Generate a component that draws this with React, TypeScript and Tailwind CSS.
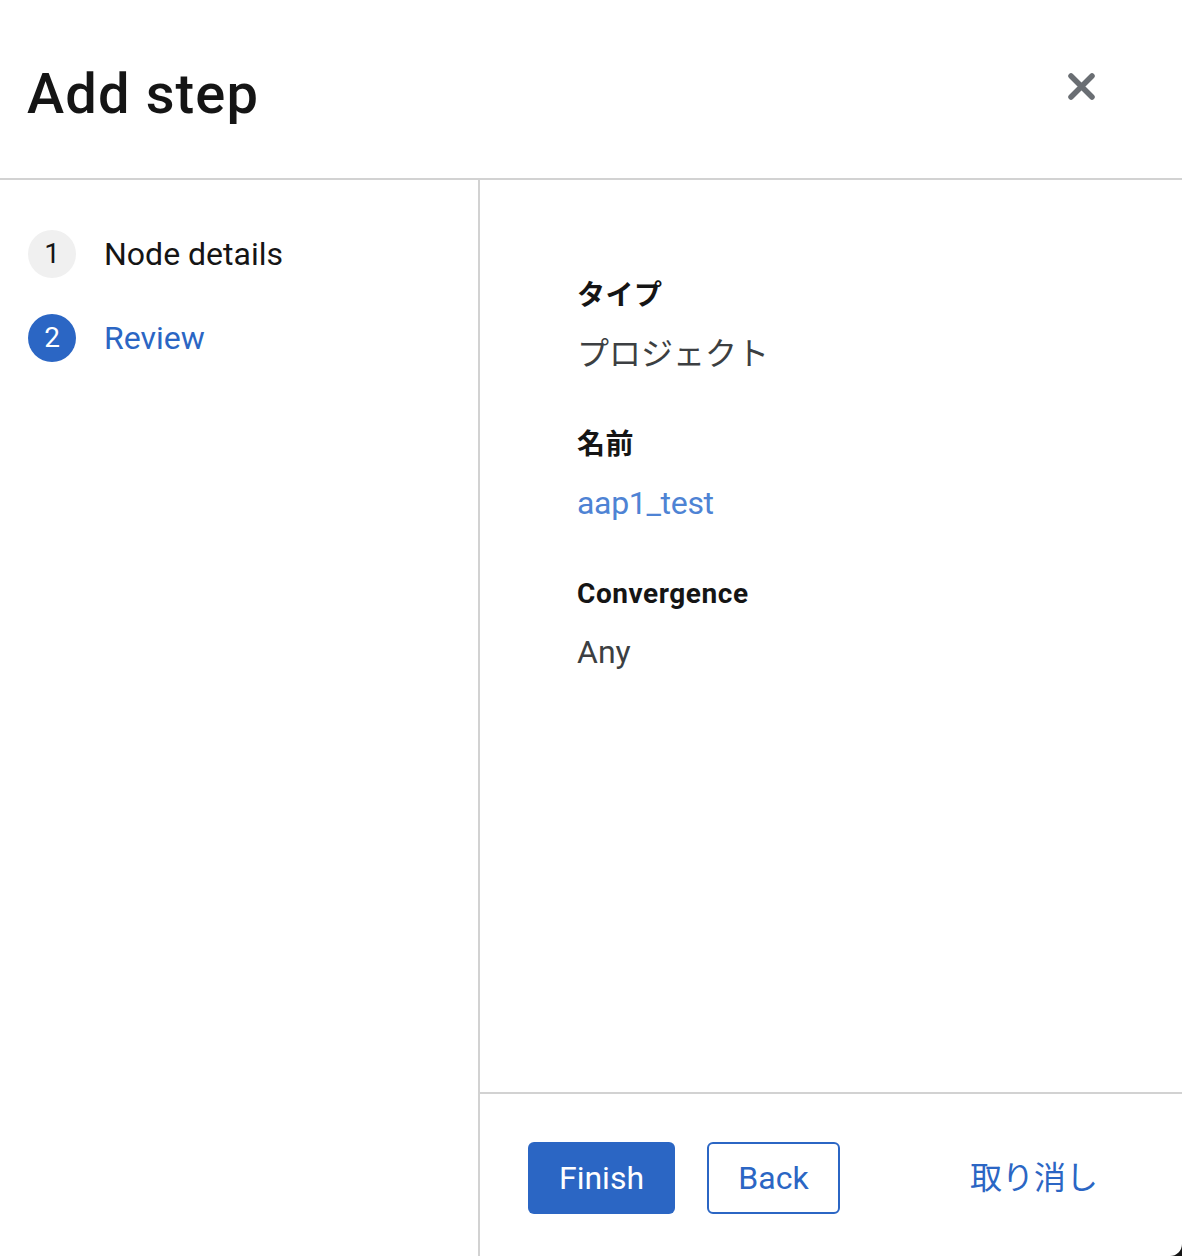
const font = { fontFamily: "Roboto, 'Noto Sans CJK JP', sans-serif" };

const steps = [
  { n: 1, label: "Node details", current: false },
  { n: 2, label: "Review", current: true },
];

const details = [
  { term: "タイプ", value: "プロジェクト", link: false },
  { term: "名前", value: "aap1_test", link: true },
  { term: "Convergence", value: "Any", link: false },
];

function CloseIcon() {
  return (
    <svg width="27" height="27" viewBox="0 0 27 27" aria-hidden="true">
      <path
        d="M3 3 L24 24 M24 3 L3 24"
        stroke="#6a6e73"
        strokeWidth="5.5"
        strokeLinecap="round"
      />
    </svg>
  );
}

export default function App() {
  return (
    <div className="w-[1182px] h-[1256px] bg-[#151515]" style={font}>
      <div className="flex flex-col h-full bg-white rounded-br-[12px] overflow-hidden">
        {/* Header */}
        <div className="flex items-start justify-between h-[180px] shrink-0 border-b-2 border-[#d2d2d2] pl-[27px] pr-[87px] pt-[66px]">
          <h1 className="text-[56px] leading-[56px] font-medium text-[#151515] tracking-[0.02em]">
            Add step
          </h1>
          <button className="mt-[7px]" aria-label="Close">
            <CloseIcon />
          </button>
        </div>

        {/* Body */}
        <div className="flex flex-1 min-h-0">
          {/* Steps nav */}
          <nav className="w-[480px] shrink-0 border-r-2 border-[#d2d2d2] pt-[50px] pl-[28px]">
            <ol className="flex flex-col gap-[36px]">
              {steps.map((s) => (
                <li key={s.n} className="flex items-center gap-[28px]">
                  <span
                    className={`flex items-center justify-center w-[48px] h-[48px] rounded-full text-[28px] ${
                      s.current
                        ? "bg-[#2b66c4] text-white"
                        : "bg-[#f0f0f0] text-[#151515]"
                    }`}
                  >
                    {s.n}
                  </span>
                  <span
                    className={`text-[32px] leading-[48px] ${
                      s.current ? "text-[#2b66c4]" : "text-[#151515]"
                    }`}
                  >
                    {s.label}
                  </span>
                </li>
              ))}
            </ol>
          </nav>

          {/* Main */}
          <div className="flex flex-col flex-1">
            <div className="flex-1 pt-[96px] pl-[97px]">
              <dl className="flex flex-col gap-[47px]">
                {details.map((d) => (
                  <div key={d.term} className="flex flex-col">
                    <dt className="text-[28px] leading-[40px] font-bold text-[#151515] tracking-[0.02em]">
                      {d.term}
                    </dt>
                    <dd
                      className={`mt-[14px] text-[32px] leading-[48px] ${
                        d.link ? "text-[#4e83d4] tracking-[-0.01em]" : "text-[#3c3f42]"
                      }`}
                    >
                      {d.value}
                    </dd>
                  </div>
                ))}
              </dl>
            </div>

            {/* Footer */}
            <div className="h-[164px] shrink-0 border-t-2 border-[#d2d2d2] flex items-start pt-[48px] pl-[48px]">
              <button className="w-[147px] h-[72px] rounded-[6px] bg-[#2b66c4] text-white text-[32px]">
                Finish
              </button>
              <button className="ml-[32px] w-[133px] h-[72px] rounded-[6px] border-2 border-[#2b66c4] text-[#2b66c4] text-[32px]">
                Back
              </button>
              <button className="ml-[130px] h-[72px] text-[32px] text-[#2b66c4]">
                取り消し
              </button>
            </div>
          </div>
        </div>
      </div>
    </div>
  );
}
